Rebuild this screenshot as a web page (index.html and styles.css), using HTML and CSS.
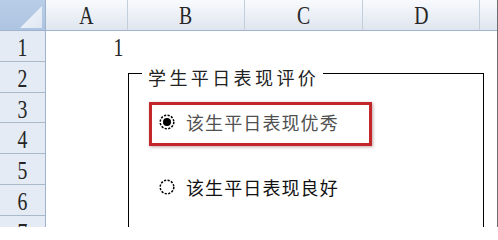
FILE: index.html
```html
<!DOCTYPE html>
<html>
<head>
<meta charset="utf-8">
<link rel="stylesheet" href="styles.css">
</head>
<body>
<div class="sheet">
  <div class="corner"></div>
  <div class="colhead"><span class="lbl">A</span></div>
  <div class="colhead"><span class="lbl">B</span></div>
  <div class="colhead"><span class="lbl">C</span></div>
  <div class="colhead"><span class="lbl">D</span></div>
  <div class="colhead last"></div>

  <div class="rowhead"><span class="lbl">1</span></div>
  <div class="cell num"><span class="lbl">1</span></div>
  <div class="cell"></div><div class="cell"></div><div class="cell"></div><div class="cell"></div>

  <div class="rowhead"><span class="lbl">2</span></div>
  <div class="cell"></div><div class="cell"></div><div class="cell"></div><div class="cell"></div><div class="cell"></div>

  <div class="rowhead"><span class="lbl">3</span></div>
  <div class="cell"></div><div class="cell"></div><div class="cell"></div><div class="cell"></div><div class="cell"></div>

  <div class="rowhead"><span class="lbl">4</span></div>
  <div class="cell"></div><div class="cell"></div><div class="cell"></div><div class="cell"></div><div class="cell"></div>

  <div class="rowhead"><span class="lbl">5</span></div>
  <div class="cell"></div><div class="cell"></div><div class="cell"></div><div class="cell"></div><div class="cell"></div>

  <div class="rowhead"><span class="lbl">6</span></div>
  <div class="cell"></div><div class="cell"></div><div class="cell"></div><div class="cell"></div><div class="cell"></div>

  <div class="rowhead"><span class="lbl">7</span></div>
  <div class="cell"></div><div class="cell"></div><div class="cell"></div><div class="cell"></div><div class="cell"></div>

  <div class="groupbox">
    <div class="gb-head">
      <div class="gb-line short"></div>
      <div class="gb-title">学生平日表现评价</div>
      <div class="gb-line fill"></div>
    </div>
    <div class="options">
      <div class="option selected">
        <svg class="radio" width="16" height="16" viewBox="0 0 16 16">
          <circle cx="8" cy="8" r="6.8" fill="#fff" stroke="#000" stroke-width="1.5" stroke-dasharray="2.2 1.4"/>
          <circle cx="8" cy="8" r="4" fill="#000"/>
        </svg>
        <span class="opt-text light">该生平日表现优秀</span>
      </div>
      <div class="option">
        <svg class="radio" width="16" height="16" viewBox="0 0 16 16">
          <circle cx="8" cy="8" r="6.8" fill="#fff" stroke="#000" stroke-width="1.5" stroke-dasharray="2.2 1.4"/>
        </svg>
        <span class="opt-text">该生平日表现良好</span>
      </div>
    </div>
  </div>
</div>
</body>
</html>
```

FILE: styles.css
```css
html, body {
  margin: 0;
  padding: 0;
  background: #fff;
}

.sheet {
  position: relative;
  width: 497px;
  height: 227px;
  overflow: hidden;
  border-right: 1px solid #6d6d6d;
  display: grid;
  grid-template-columns: 46px 82px 117px 118px 117px 17px;
  grid-template-rows: 31px repeat(7, 30.8px);
  font-family: "Liberation Serif", "DejaVu Serif", serif;
  color: #262626;
}

.lbl {
  display: inline-block;
  font-size: 26px;
  line-height: 24px;
  transform: scaleX(0.76);
}

.corner {
  position: relative;
  background: linear-gradient(#b9cde6, #adc4e2);
  border-right: 1px solid #9fb3cc;
  border-bottom: 1px solid #9fb3cc;
  box-sizing: border-box;
}

.corner::after {
  content: "";
  position: absolute;
  left: 20px;
  top: 6px;
  width: 22px;
  height: 22px;
  background: linear-gradient(135deg, #f4f7fb, #dfe7f2);
  clip-path: polygon(100% 0, 100% 100%, 0 100%);
}

.colhead {
  box-sizing: border-box;
  background: linear-gradient(#f8fafd, #e9eef5 60%, #dfe6ef);
  border-right: 1px solid #c2cedc;
  border-bottom: 1px solid #9fb3cc;
  text-align: center;
  padding-top: 4px;
}

.colhead.last {
  border-right: none;
}

.rowhead {
  box-sizing: border-box;
  background: #e4ebf5;
  border-right: 1px solid #9fb3cc;
  border-bottom: 1px solid #a9b9cc;
  text-align: center;
  padding-top: 5px;
}

.cell {
  background: #fff;
}

.cell.num {
  text-align: right;
  padding-right: 3px;
  padding-top: 5px;
}

.groupbox {
  position: absolute;
  left: 128px;
  top: 73px;
  width: 356px;
  height: 190px;
  box-sizing: border-box;
  border-left: 1px solid #000;
  border-right: 1px solid #000;
  border-bottom: 1px solid #000;
  font-family: "Noto Sans CJK SC", "Noto Sans", sans-serif;
}

.gb-head {
  display: flex;
  align-items: flex-start;
  height: 1px;
}

.gb-line {
  height: 0;
  border-top: 1px solid #000;
}

.gb-line.short {
  width: 13px;
}

.gb-line.fill {
  flex: 1;
}

.gb-title {
  margin-top: -5px;
  padding: 0 4px 0 6px;
  font-size: 18px;
  line-height: 18px;
  letter-spacing: 3.4px;
  color: #222;
  white-space: nowrap;
}

.options {
  display: flex;
  flex-direction: column;
  gap: 21px;
  margin-top: 28px;
  margin-left: 20px;
}

.option {
  display: flex;
  align-items: center;
  gap: 11px;
  width: 223px;
  height: 44px;
  box-sizing: border-box;
  border: 3px solid transparent;
  padding: 0 0 4px 7px;
}

.option.selected {
  border-color: #c3262b;
  box-shadow: 1px 1px 3px rgba(80, 0, 0, 0.35);
}

.radio {
  flex: none;
}

.opt-text {
  font-size: 18px;
  line-height: 18px;
  letter-spacing: 1.1px;
  color: #111;
  white-space: nowrap;
}

.opt-text.light {
  color: #505050;
}
```
